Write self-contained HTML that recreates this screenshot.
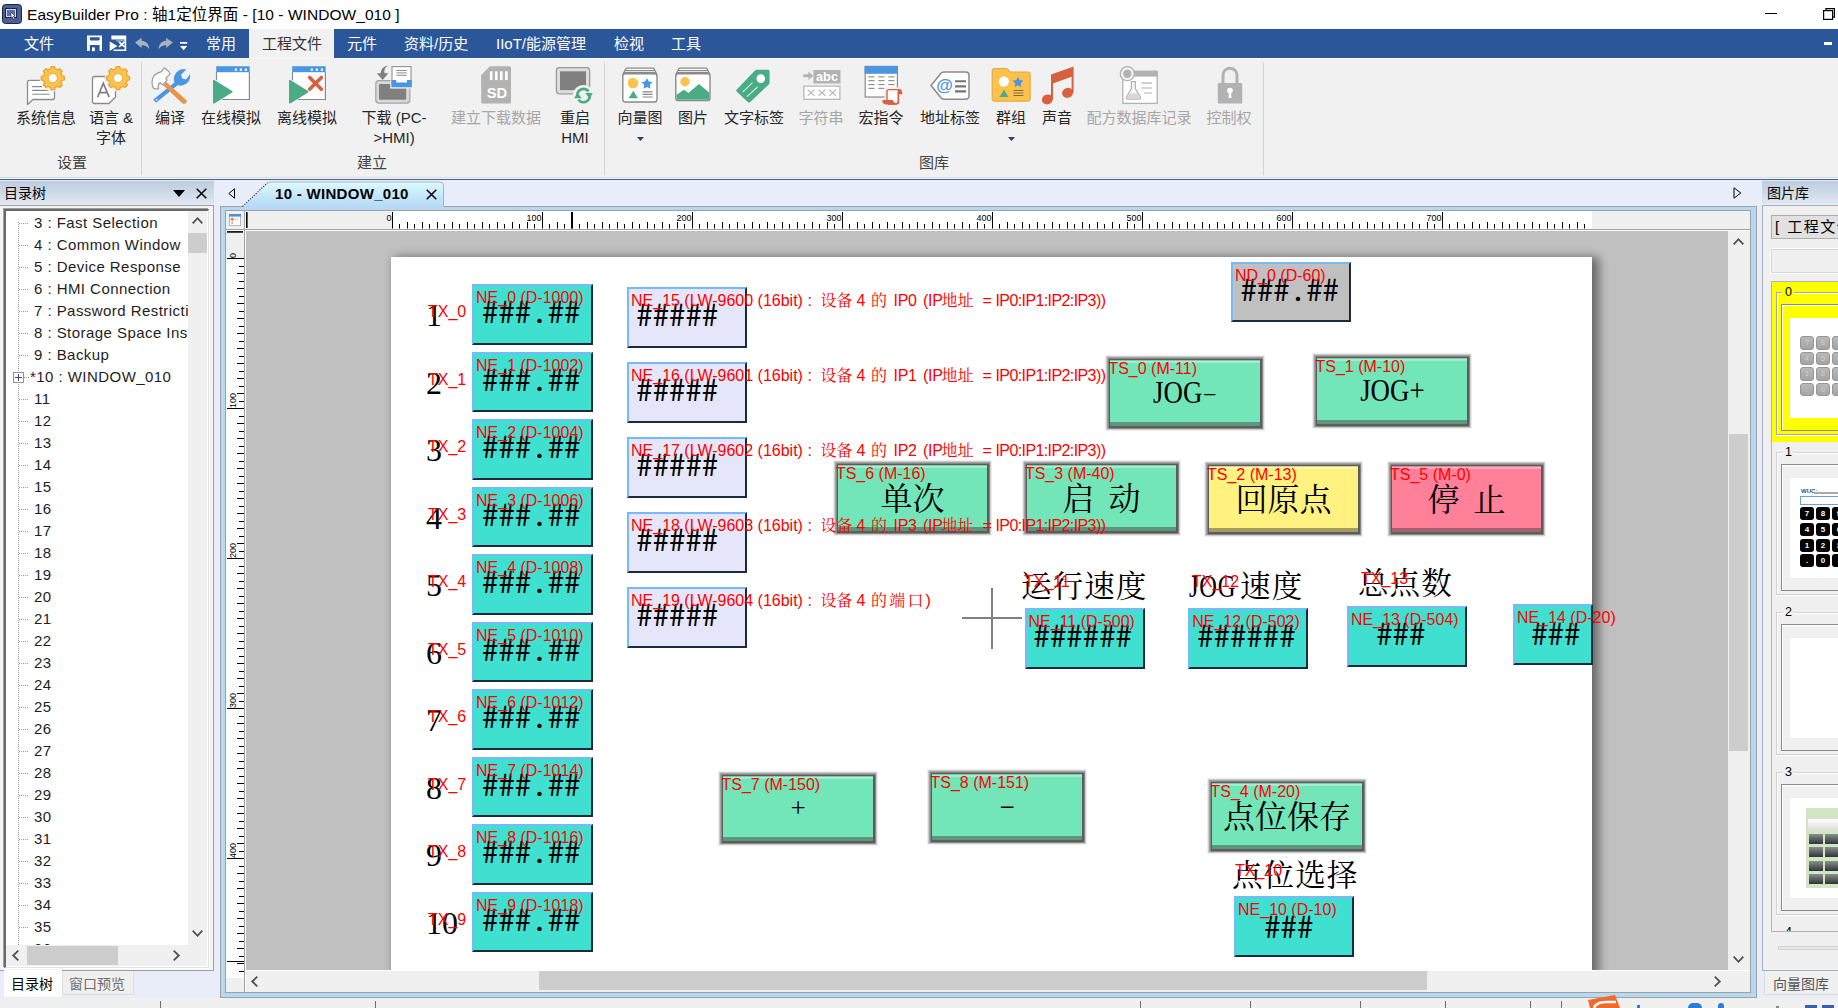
<!DOCTYPE html>
<html lang="zh-CN"><head><meta charset="utf-8"><title>EasyBuilder Pro</title>
<style>
*{box-sizing:border-box;margin:0;padding:0}
html,body{width:1838px;height:1008px;overflow:hidden;background:#f0f0f0}
body{position:relative;font-family:"Liberation Sans","Noto Sans CJK SC",sans-serif;font-size:15px;color:#1e1e1e}
.a{position:absolute}
.t{position:absolute;white-space:nowrap;line-height:1}
#title{left:0;top:0;width:1838px;height:29px;background:#fff}
#menubar{left:0;top:29px;width:1838px;height:29px;background:#2b579a}
#menubar .t{color:#fff;font-size:15px;top:7px}
#ribbon{left:0;top:58px;width:1838px;height:119px;background:#f1f1f1}
.rl{position:absolute;white-space:nowrap;font-size:15px;line-height:20px;text-align:center;color:#262626;transform:translateX(-50%)}
.rl.d{color:#a6a6a6}
.gl{position:absolute;white-space:nowrap;font-size:15px;line-height:1;color:#444;top:97px;transform:translateX(-50%)}
.sep{position:absolute;top:4px;width:1px;height:113px;background:#d4d4d4}
.ic{position:absolute;overflow:visible}
.red{position:absolute;white-space:nowrap;color:#f00;font-size:16px;line-height:1;font-family:"Liberation Sans","Noto Serif CJK SC",sans-serif}
.ne{position:absolute;background:#40e0d0;border-style:solid;border-width:2px;border-color:#78b9fc #1a2b40 #1a2b40 #78b9fc}
.hash{position:absolute;white-space:nowrap;font-family:"Noto Sans Mono CJK SC","IPAGothic","Liberation Mono",monospace;font-size:32px;line-height:1;color:#000;letter-spacing:.4px;transform:scaleY(.95)}
.lat{display:inline-block;transform-origin:0 50%;font-family:"Liberation Serif",serif}
.sim{position:absolute;white-space:nowrap;font-family:"Liberation Serif","Noto Serif CJK SC",serif;font-size:32px;line-height:1;color:#000}
.ts{position:absolute;box-shadow:.5px .5px 0 1.9px #5c5c5c,0 0 0 3.1px #a2a2a2,0 0 0 4.4px #d2d2d2}
.ts i{position:absolute;left:0;top:0;right:0;bottom:0;box-shadow:inset 0 -4px 0 rgba(70,70,70,.5);background:linear-gradient(180deg,rgba(90,90,90,.35) 0,rgba(255,255,255,.38) 1.5px,rgba(255,255,255,.3) 2.5px,rgba(255,255,255,0) 3.5px)}
.tr{position:absolute;left:34px;white-space:nowrap;font-size:15px;line-height:1;letter-spacing:.45px}
.dot{position:absolute;background-image:linear-gradient(90deg,#9a9a9a 50%,transparent 50%);background-size:2px 1px;height:1px}
.vdot{position:absolute;background-image:linear-gradient(180deg,#9a9a9a 50%,transparent 50%);background-size:1px 2px;width:1px}
</style></head><body>

<div id="title" class="a">
<svg class="ic" style="left:2px;top:4px" width="20" height="20" viewBox="0 0 20 20"><rect x="0.5" y="0.5" width="19" height="19" rx="3" fill="#4a5f96" stroke="#1c2440"/><rect x="3.5" y="4.5" width="11" height="9" fill="#cfd8ee" stroke="#1c2440"/><rect x="5" y="6" width="8" height="6" fill="#5a70ad"/><path d="M9 8 L13 12 L11.5 12.3 L13 15 L11.8 15.6 L10.4 12.9 L9 14 Z" fill="#fff" stroke="#1c2440" stroke-width=".6"/></svg>
<span class="t" id="ttl" style="left:27px;top:7px;font-size:15.5px;color:#000;letter-spacing:.05px">EasyBuilder Pro : 轴1定位界面 - [10 - WINDOW_010 ]</span>
<div class="a" style="left:1765px;top:13px;width:12px;height:1px;background:#000"></div>
<svg class="ic" style="left:1823px;top:8px" width="13" height="12" viewBox="0 0 13 12"><path d="M2.9 2.6 V0.6 H11.4 V9.1 H9.6" fill="none" stroke="#000" stroke-width="1.2"/><rect x="0.6" y="2.6" width="9" height="8.8" fill="none" stroke="#000" stroke-width="1.2"/></svg>
</div>
<div id="menubar" class="a">
<div class="a" style="left:249px;top:0;width:85px;height:29px;background:#f1f1f1"></div>
<span class="t" style="left:24px;color:#fff">文件</span>
<span class="t" style="left:206px;color:#fff">常用</span>
<span class="t" style="left:262px;color:#333">工程文件</span>
<span class="t" style="left:347px;color:#fff">元件</span>
<span class="t" style="left:404px;color:#fff">资料/历史</span>
<span class="t" style="left:496px;color:#fff">IIoT/能源管理</span>
<span class="t" style="left:614px;color:#fff">检视</span>
<span class="t" style="left:671px;color:#fff">工具</span>
<svg class="ic" style="left:87px;top:6px" width="15" height="16" viewBox="87 35 15 16"><rect x="87" y="35.5" width="15" height="15.5" fill="#fff"/><path d="M89.8 37.2 H99.6 V39.2 Q99.6 40.6 98.2 40.6 H91.2 Q89.8 40.6 89.8 39.2Z" fill="#2b579a"/><rect x="89.8" y="45" width="9.8" height="6.2" fill="#2b579a"/><rect x="92" y="47.4" width="2.8" height="3.8" fill="#fff"/></svg>
<svg class="ic" style="left:109px;top:6px" width="18" height="16" viewBox="109 35 18 16"><rect x="111.4" y="35.5" width="14.8" height="4" fill="#fff"/><path d="M125.4 39 V50.2 H113.6" fill="none" stroke="#fff" stroke-width="1.6"/><path d="M109.7 41.4 L117.4 46 L109.7 51 Z" fill="#fff"/><path d="M119 41.8 L124.6 47 M124.6 41.8 L119 47" stroke="#fff" stroke-width="1.7"/><rect x="116" y="40.2" width="9" height="1.2" fill="#fff" opacity=".55"/></svg>
<svg class="ic" style="left:134px;top:8px" width="16" height="13" viewBox="134 37 16 13"><path d="M135 42.6 L141.6 37.8 V40.8 C146.4 41 149 44.2 149.2 49.4 C147 46 144.8 45.2 141.6 45.2 V48 Z" fill="#aab0bc"/></svg>
<svg class="ic" style="left:158px;top:8px" width="16" height="13" viewBox="158 37 16 13"><path d="M172.8 42.6 L166.2 37.8 V40.8 C161.4 41 158.8 44.2 158.6 49.4 C160.8 46 163 45.2 166.2 45.2 V48 Z" fill="#aab0bc"/></svg>
<svg class="ic" style="left:180px;top:12px" width="8" height="10" viewBox="180 41 8 10"><rect x="180" y="42" width="7.2" height="1.7" fill="#fff"/><path d="M180 46 H187.2 L183.6 50.2 Z" fill="#fff"/></svg>
<div class="a" style="left:1824px;top:13px;width:8px;height:3px;background:#fff"></div>
</div>
<div id="ribbon" class="a">
<div class="a" style="left:0;top:0;width:1838px;height:1px;background:#f6f6f6"></div>
<div class="a" style="left:27px;top:8px;width:38px;height:40px"><svg style="position:absolute;left:0;top:0;overflow:visible" width="38" height="40" viewBox="27 66 38 40"><path d="M29.5 80.3 H52.5 Q54.5 80.3 54.5 82.3 V97.5 Q54.5 99.5 52.5 99.5 H33 L27.5 104.6 V82.3 Q27.5 80.3 29.5 80.3Z" fill="#fff" stroke="#8a8a8a" stroke-width="1.3" stroke-linejoin="round"/><path d="M32.2 86.6H42 M32.2 90.4H49.5 M32.2 94.3H49.5" stroke="#8a8a8a" stroke-width="1.1"/><circle cx="52.8" cy="78.1" r="13.3" fill="#f1f1f1"/><path d="M62.13 75.86 L64.36 76.27 L64.36 79.93 L62.13 80.34 L60.99 83.12 L62.27 84.98 L59.68 87.57 L57.82 86.29 L55.04 87.43 L54.63 89.66 L50.97 89.66 L50.56 87.43 L47.78 86.29 L45.92 87.57 L43.33 84.98 L44.61 83.12 L43.47 80.34 L41.24 79.93 L41.24 76.27 L43.47 75.86 L44.61 73.08 L43.33 71.22 L45.92 68.63 L47.78 69.91 L50.56 68.77 L50.97 66.54 L54.63 66.54 L55.04 68.77 L57.82 69.91 L59.68 68.63 L62.27 71.22 L60.99 73.08Z" fill="#fcc24c" stroke="#e6a73a" stroke-width="1.3" stroke-linejoin="round"/><circle cx="52.8" cy="78.1" r="4.6" fill="#fff" stroke="#e6a73a" stroke-width="0.9"/></svg></div>
<div class="rl" style="left:46px;top:50px">系统信息</div>
<div class="a" style="left:90px;top:8px;width:38px;height:40px"><svg style="position:absolute;left:0;top:0;overflow:visible" width="38" height="40" viewBox="90 66 38 40"><path d="M94.5 76.5 H113.5 Q115.5 76.5 115.5 78.5 V97 L109 103.5 H94.5 Q92.5 103.5 92.5 101.5 V78.5 Q92.5 76.5 94.5 76.5Z" fill="#fff" stroke="#8a8a8a" stroke-width="1.3" stroke-linejoin="round"/><path d="M97.6 97.2 L103.3 83.2 L109.2 97.2 M99.6 92.6 H107.2" fill="none" stroke="#7f7f7f" stroke-width="1.7"/><circle cx="118.0" cy="78.1" r="13.3" fill="#f1f1f1"/><path d="M127.33 75.86 L129.56 76.27 L129.56 79.93 L127.33 80.34 L126.19 83.12 L127.47 84.98 L124.88 87.57 L123.02 86.29 L120.24 87.43 L119.83 89.66 L116.17 89.66 L115.76 87.43 L112.98 86.29 L111.12 87.57 L108.53 84.98 L109.81 83.12 L108.67 80.34 L106.44 79.93 L106.44 76.27 L108.67 75.86 L109.81 73.08 L108.53 71.22 L111.12 68.63 L112.98 69.91 L115.76 68.77 L116.17 66.54 L119.83 66.54 L120.24 68.77 L123.02 69.91 L124.88 68.63 L127.47 71.22 L126.19 73.08Z" fill="#fcc24c" stroke="#e6a73a" stroke-width="1.3" stroke-linejoin="round"/><circle cx="118.0" cy="78.1" r="4.6" fill="#fff" stroke="#e6a73a" stroke-width="0.9"/></svg></div>
<div class="rl" style="left:111px;top:50px">语言 &amp;<br>字体</div>
<div class="a" style="left:151px;top:8px;width:38px;height:40px"><svg style="position:absolute;left:0;top:0;overflow:visible" width="38" height="40" viewBox="151 66 38 40"><path d="M156 102.8 L153.3 99.6 L174.5 82.5 Q172.5 77 176.5 72.2 Q180.5 68 186.2 69.4 L181 74.8 L182.2 78.6 L186 79.6 L190 74.2 Q190.8 80 186.5 83.6 Q182.5 86.6 177.6 85.2 Z" fill="#4a96e2"/><circle cx="156.6" cy="99.6" r="0.9" fill="#fff"/><path d="M163.2 85.2 L166.2 82 L186.5 100.2 Q187.3 102.2 185.8 103.2 Q184.4 104.4 182.6 103.4 Z" fill="#e8924a"/><path d="M158.6 88.6 Q154.5 89.5 153 87.6 Q150.5 81 154.2 75.6 Q157 72.6 161.5 71.6 L163.2 69 Q164 67.6 165.4 68.5 L169.6 72.4 Q170.4 73.4 169.6 74.4 L165.8 78.4 L167.2 80.2 L162.6 84.8 L160.2 82.6 Q157.5 84.2 158.6 88.6 Z" fill="#fff" stroke="#9a9a9a" stroke-width="1.2" stroke-linejoin="round"/></svg></div>
<div class="rl" style="left:170px;top:50px">编译</div>
<div class="a" style="left:213px;top:8px;width:38px;height:40px"><svg style="position:absolute;left:0;top:0;overflow:visible" width="38" height="40" viewBox="213 66 38 40"><rect x="216.2" y="66.2" width="33.5" height="33.3" fill="#fff"/><path d="M216.5 72 V99.5 H249.4 V72" fill="none" stroke="#8a8a8a" stroke-width="1.2"/><rect x="216.2" y="66.2" width="33.5" height="6" fill="#4a96e2"/><rect x="234.8" y="68.6" width="2.2" height="2.2" fill="#fff"/><rect x="239.8" y="68.6" width="2.2" height="2.2" fill="#fff"/><rect x="244.8" y="68.6" width="2.2" height="2.2" fill="#fff"/><path d="M213.8 80.2 V103.2 L232.0 91.7Z" fill="#f1f1f1" stroke="#f1f1f1" stroke-width="2.6" stroke-linejoin="round"/><path d="M213.8 80.6 V102.8 L231.6 91.7Z" fill="#4aab87" stroke="#4aab87" stroke-width="1.6" stroke-linejoin="round"/></svg></div>
<div class="rl" style="left:231px;top:50px">在线模拟</div>
<div class="a" style="left:289px;top:8px;width:38px;height:40px"><svg style="position:absolute;left:0;top:0;overflow:visible" width="38" height="40" viewBox="289 66 38 40"><rect x="292.2" y="66.2" width="33.5" height="33.3" fill="#fff"/><path d="M292.5 72 V99.5 H325.4 V72" fill="none" stroke="#8a8a8a" stroke-width="1.2"/><rect x="292.2" y="66.2" width="33.5" height="6" fill="#4a96e2"/><rect x="310.8" y="68.6" width="2.2" height="2.2" fill="#fff"/><rect x="315.8" y="68.6" width="2.2" height="2.2" fill="#fff"/><rect x="320.8" y="68.6" width="2.2" height="2.2" fill="#fff"/><path d="M309.6 77.4 L321.4 89.2 M321.4 77.4 L309.6 89.2" stroke="#d9603f" stroke-width="3.6" stroke-linecap="round"/><path d="M289.8 80.2 V103.2 L308.0 91.7Z" fill="#f1f1f1" stroke="#f1f1f1" stroke-width="2.6" stroke-linejoin="round"/><path d="M289.8 80.6 V102.8 L307.6 91.7Z" fill="#4aab87" stroke="#4aab87" stroke-width="1.6" stroke-linejoin="round"/></svg></div>
<div class="rl" style="left:307px;top:50px">离线模拟</div>
<div class="a" style="left:375px;top:8px;width:38px;height:40px"><svg style="position:absolute;left:0;top:0;overflow:visible" width="38" height="40" viewBox="375 66 38 40"><rect x="375.8" y="80.6" width="34" height="22.5" rx="3" fill="#d9d9d9" stroke="#a3a3a3" stroke-width="1.2"/><rect x="379" y="84" width="27.2" height="15.8" rx="1" fill="#808080"/><rect x="390.2" y="65.2" width="22.2" height="23.4" fill="#f1f1f1"/><rect x="392" y="66.6" width="19" height="17" fill="#fff" stroke="#9a9a9a" stroke-width="1.2"/><path d="M396.4 70.5H406.8 M396.4 72.9H406.8 M396.4 75.3H406.8" stroke="#8a8a8a" stroke-width="1"/><path d="M391.4 80 H396.3 V82.6 H406.9 V80 H411.8 V87.3 H391.4Z" fill="#4a96e2"/><path d="M388.4 65.4 Q383.2 68.2 384.6 73.2 H388.4 L382.6 80 L376.8 73.2 H380.6 Q380.4 67 388.4 65.4Z" fill="#808080"/></svg></div>
<div class="rl" style="left:394px;top:50px">下载 (PC-<br>&gt;HMI)</div>
<div class="a" style="left:480px;top:8px;width:32px;height:40px"><svg style="position:absolute;left:0;top:0;overflow:visible" width="32" height="40" viewBox="480 66 32 40"><path d="M489.8 66.2 H509.4 Q511 66.2 511 67.8 V102 Q511 103.6 509.4 103.6 H482.8 Q481.2 103.6 481.2 102 V75.2 Z" fill="#b2b2b2"/><rect x="489.9" y="71.3" width="2.6" height="8.8" fill="#fff"/><rect x="495.0" y="71.3" width="2.6" height="8.8" fill="#fff"/><rect x="500.0" y="71.3" width="2.6" height="8.8" fill="#fff"/><rect x="505.1" y="71.3" width="2.6" height="8.8" fill="#fff"/><text x="497" y="97.6" font-family="Liberation Sans,sans-serif" font-weight="bold" font-size="15.4" text-anchor="middle" fill="#fff" textLength="20.4" lengthAdjust="spacingAndGlyphs">SD</text></svg></div>
<div class="rl d" style="left:496px;top:50px">建立下载数据</div>
<div class="a" style="left:556px;top:8px;width:38px;height:40px"><svg style="position:absolute;left:0;top:0;overflow:visible" width="38" height="40" viewBox="556 66 38 40"><rect x="556.4" y="67.6" width="33.2" height="26.2" rx="3" fill="#dedede" stroke="#9b9b9b" stroke-width="1.3"/><rect x="560" y="71.3" width="26" height="18.8" fill="#808080"/><circle cx="583.5" cy="95.6" r="10.6" fill="#f1f1f1"/><path d="M577.2 95 A6.4 6.4 0 0 1 588.6 91.4" fill="none" stroke="#4aab87" stroke-width="2.6"/><path d="M585.2 93 H592.8 L589.6 98.4Z" fill="#4aab87"/><path d="M589.8 96.2 A6.4 6.4 0 0 1 578.4 99.8" fill="none" stroke="#4aab87" stroke-width="2.6"/><path d="M581.8 98.2 H574.2 L577.4 92.8Z" fill="#4aab87"/></svg></div>
<div class="rl" style="left:575px;top:50px">重启<br>HMI</div>
<div class="a" style="left:621px;top:8px;width:38px;height:40px"><svg style="position:absolute;left:0;top:0;overflow:visible" width="38" height="40" viewBox="621 66 38 40"><path d="M622.8 74.6 L625.6 69 Q626.0 68.2 627.2 68.2 H652.6 Q653.8 68.2 654.2 69 L657.0 74.6" fill="#fff" stroke="#8a8a8a" stroke-width="1.2"/><path d="M625.0 70.6H654.8 M624.0 72.6H655.8" stroke="#8a8a8a" stroke-width="1.1"/><rect x="622.8" y="73.8" width="34.2" height="28.2" rx="2.4" fill="#fff" stroke="#8a8a8a" stroke-width="1.4"/><circle cx="633" cy="83" r="5.3" fill="#fcc24c"/><path d="M647.00 78.00 L648.76 81.47 L652.61 82.08 L649.85 84.83 L650.47 88.67 L647.00 86.90 L643.53 88.67 L644.15 84.83 L641.39 82.08 L645.24 81.47Z" fill="#4a96e2"/><path d="M628.6 98.2 H638 L633.3 90.8Z" fill="#4aab87"/><path d="M642.5 91.8H652.6 M642.5 94.4H652.6 M642.5 97H652.6" stroke="#8a8a8a" stroke-width="1.2"/></svg></div>
<div class="rl" style="left:640px;top:50px">向量图</div>
<div class="a" style="left:674px;top:8px;width:38px;height:40px"><svg style="position:absolute;left:0;top:0;overflow:visible" width="38" height="40" viewBox="674 66 38 40"><path d="M675.8 74.6 L678.6 69 Q679.0 68.2 680.2 68.2 H705.6 Q706.8 68.2 707.2 69 L710.0 74.6" fill="#fff" stroke="#8a8a8a" stroke-width="1.2"/><path d="M678.0 70.6H707.8 M677.0 72.6H708.8" stroke="#8a8a8a" stroke-width="1.1"/><rect x="675.8" y="73.8" width="34.2" height="26.8" rx="2.4" fill="#fff" stroke="#8a8a8a" stroke-width="1.4"/><circle cx="685" cy="81.7" r="4.7" fill="#fcc24c"/><path d="M676.6 94.8 L684 89.8 L688.4 92.9 L699 84 L709.2 92.4 V99.8 H676.6Z" fill="#4aab87"/></svg></div>
<div class="rl" style="left:693px;top:50px">图片</div>
<div class="a" style="left:735px;top:8px;width:36px;height:40px"><svg style="position:absolute;left:0;top:0;overflow:visible" width="36" height="40" viewBox="735 66 36 40"><path d="M757 69.8 H768 Q769.6 69.8 769.6 71.4 V82.6 Q769.6 83.6 768.8 84.4 L750.2 102 Q749 103.2 747.8 102 L736.8 91.8 Q735.6 90.6 736.8 89.4 L755 70.6 Q755.8 69.8 757 69.8Z" fill="#4aab87"/><circle cx="760.8" cy="78.6" r="4.3" fill="#fff"/><path d="M742.7 92.1 L752.5 82.7 M747 96.7 L757.6 87" stroke="#d5ece2" stroke-width="1.1"/></svg></div>
<div class="rl" style="left:754px;top:50px">文字标签</div>
<div class="a" style="left:802px;top:8px;width:40px;height:40px"><svg style="position:absolute;left:0;top:0;overflow:visible" width="40" height="40" viewBox="802 66 40 40"><path d="M803.3 74.2 H808.4 V71.4 L813.2 75.7 L808.4 80 V77.2 H803.3Z" fill="#b2b2b2"/><rect x="813.4" y="70" width="27.1" height="13.5" fill="#b2b2b2"/><text x="827" y="81" font-family="Liberation Sans,sans-serif" font-weight="bold" font-size="12.5" text-anchor="middle" fill="#fff" textLength="22" lengthAdjust="spacingAndGlyphs">abc</text><rect x="803.9" y="86.1" width="36" height="13.2" fill="#fff" stroke="#b2b2b2" stroke-width="1.2"/><path d="M807.6 89.6 L814.4 95.8 M814.4 89.6 L807.6 95.8" stroke="#b2b2b2" stroke-width="1.1"/><path d="M818.6 89.6 L825.4 95.8 M825.4 89.6 L818.6 95.8" stroke="#b2b2b2" stroke-width="1.1"/><path d="M829.3 89.6 L836.1 95.8 M836.1 89.6 L829.3 95.8" stroke="#b2b2b2" stroke-width="1.1"/></svg></div>
<div class="rl d" style="left:821px;top:50px">字符串</div>
<div class="a" style="left:864px;top:8px;width:39px;height:40px"><svg style="position:absolute;left:0;top:0;overflow:visible" width="39" height="40" viewBox="864 66 39 40"><rect x="865.2" y="66.4" width="32.2" height="30.6" fill="#fff" stroke="#8a8a8a" stroke-width="1.2"/><rect x="864.6" y="66.2" width="33.4" height="7.6" fill="#4a96e2"/><rect x="868.3" y="76.3" width="6.2" height="1.1" fill="#8a8a8a"/><rect x="878.3" y="76.3" width="6.2" height="1.1" fill="#8a8a8a"/><rect x="888.3" y="76.3" width="6.2" height="1.1" fill="#8a8a8a"/><rect x="868.3" y="80.1" width="6.2" height="1.1" fill="#8a8a8a"/><rect x="878.3" y="80.1" width="6.2" height="1.1" fill="#8a8a8a"/><rect x="888.3" y="80.1" width="6.2" height="1.1" fill="#8a8a8a"/><rect x="868.3" y="84.0" width="6.2" height="1.1" fill="#8a8a8a"/><rect x="878.3" y="84.0" width="6.2" height="1.1" fill="#8a8a8a"/><rect x="888.3" y="84.0" width="6.2" height="1.1" fill="#8a8a8a"/><rect x="868.3" y="87.8" width="6.2" height="1.1" fill="#8a8a8a"/><rect x="878.3" y="87.8" width="6.2" height="1.1" fill="#8a8a8a"/><rect x="884.6" y="87.4" width="15" height="12" fill="#f1f1f1"/><path d="M888 104 H896.4 Q898.6 104 898.6 101.6 V92.6 Q898.6 90.6 900.2 90.6 Q901.6 90.6 901.6 92.4 V93.6 H898.6" fill="none" stroke="#d9603f" stroke-width="1.3"/><path d="M887 100.6 V91.6 Q887 89.6 889.2 89.6 H900.2 Q898.2 89.8 898.2 92 V101.2 Q898.2 103.8 895.8 103.8 H885.8 Q883.2 103.6 883 100.8 H892.6 Q892.8 103.6 895.6 103.6" fill="#fff" stroke="#d9603f" stroke-width="1.4" stroke-linejoin="round"/><path d="M883 100.8 H892.6 Q892.8 103.6 895 103.8 H885.8 Q883.2 103.6 883 100.8Z" fill="#d9603f"/><path d="M898.4 93.6 H901.6 V92.4 Q901.6 90.6 900.2 90.4 Q898.4 90.6 898.4 92.6Z" fill="#d9603f"/></svg></div>
<div class="rl" style="left:881px;top:50px">宏指令</div>
<div class="a" style="left:930px;top:8px;width:40px;height:40px"><svg style="position:absolute;left:0;top:0;overflow:visible" width="40" height="40" viewBox="930 66 40 40"><path d="M931 85.5 L941 73.2 Q942.2 71.9 943.8 71.9 H965.6 Q969 71.9 969 75.3 V95.8 Q969 99.2 965.6 99.2 H943.8 Q942.2 99.2 941 97.8 Z" fill="#fff" stroke="#8a8a8a" stroke-width="1.5" stroke-linejoin="round"/><text x="944.6" y="91" font-family="Liberation Sans,sans-serif" font-weight="bold" font-size="17" text-anchor="middle" fill="#4a96e2">@</text><path d="M955 81.3H966 M955 86.4H966 M955 91.4H966" stroke="#757575" stroke-width="2.1"/></svg></div>
<div class="rl" style="left:950px;top:50px">地址标签</div>
<div class="a" style="left:991px;top:8px;width:40px;height:40px"><svg style="position:absolute;left:0;top:0;overflow:visible" width="40" height="40" viewBox="991 66 40 40"><path d="M994 68.6 H1006.6 Q1008 68.6 1008.6 69.8 L1009.6 72 H1028.4 Q1030.2 72 1030.2 73.8 V99.4 Q1030.2 101.2 1028.4 101.2 H994 Q992.2 101.2 992.2 99.4 V70.4 Q992.2 68.6 994 68.6Z" fill="#fcc24c" stroke="#e0a63c" stroke-width="1"/><circle cx="1003.9" cy="81.6" r="5" fill="#fff"/><path d="M1018.00 76.70 L1019.70 80.05 L1023.42 80.64 L1020.76 83.30 L1021.35 87.01 L1018.00 85.30 L1014.65 87.01 L1015.24 83.30 L1012.58 80.64 L1016.30 80.05Z" fill="#4a96e2"/><path d="M999.5 96.9 H1008.5 L1004 89.8Z" fill="#4aab87"/><path d="M1013.5 90.5H1023.4 M1013.5 93H1023.4 M1013.5 95.5H1023.4" stroke="#7d6a3a" stroke-width="1.1"/></svg></div>
<div class="rl" style="left:1011px;top:50px">群组</div>
<div class="a" style="left:1041px;top:8px;width:34px;height:40px"><svg style="position:absolute;left:0;top:0;overflow:visible" width="34" height="40" viewBox="1041 66 34 40"><ellipse cx="1047.4" cy="99.4" rx="5.6" ry="4.9" fill="#d9603f" transform="rotate(-20 1047.4 99.4)"/><ellipse cx="1067.6" cy="92.8" rx="5.6" ry="4.9" fill="#d9603f" transform="rotate(-20 1067.6 92.8)"/><path d="M1051 74.4 L1073.6 66.4 V92.4 H1071.6 V76.8 L1053 83.4 V99 H1051Z" fill="#d9603f"/></svg></div>
<div class="rl" style="left:1057px;top:50px">声音</div>
<div class="a" style="left:1119px;top:8px;width:38px;height:40px"><svg style="position:absolute;left:0;top:0;overflow:visible" width="38" height="40" viewBox="1119 66 38 40"><rect x="1122.8" y="71.4" width="34.4" height="32" fill="#fff" stroke="#b2b2b2" stroke-width="1.3"/><rect x="1122.2" y="70.8" width="35.6" height="5.8" fill="#b2b2b2"/><circle cx="1127.3" cy="73.7" r="7" fill="#f4f4f4" stroke="#b2b2b2" stroke-width="1.3"/><circle cx="1127.3" cy="73.7" r="4.2" fill="#b2b2b2"/><path d="M1131.4 81.6 H1135.4 V88.6 L1140.4 97 Q1141 99.2 1138.8 99.2 H1128 Q1125.8 99.2 1126.4 97 L1131.4 88.6Z" fill="#f6f6f6" stroke="#b2b2b2" stroke-width="1.2" stroke-linejoin="round"/><path d="M1128.8 93.6 H1138 L1140 97 Q1140.4 98.6 1138.8 98.6 H1128 Q1126.4 98.6 1126.8 97Z" fill="#d8d8d8"/><path d="M1141.5 83.2H1152 M1141.5 88H1152 M1144 93H1152" stroke="#b2b2b2" stroke-width="1.2"/></svg></div>
<div class="rl d" style="left:1139px;top:50px">配方数据库记录</div>
<div class="a" style="left:1217px;top:8px;width:26px;height:40px"><svg style="position:absolute;left:0;top:0;overflow:visible" width="26" height="40" viewBox="1217 66 26 40"><path d="M1223 83.4 V75.2 A7 7 0 0 1 1237 75.2 V83.4" fill="none" stroke="#b2b2b2" stroke-width="3"/><rect x="1217.8" y="82.9" width="24.4" height="20.6" rx="1.2" fill="#b2b2b2"/><circle cx="1230" cy="90.6" r="2.8" fill="#fff"/><path d="M1228.9 92 H1231.1 L1231.4 98 H1228.6Z" fill="#fff"/></svg></div>
<div class="rl d" style="left:1229px;top:50px">控制权</div>
<svg class="ic" style="left:637px;top:79px" width="7" height="4" viewBox="0 0 7 4"><path d="M0 0 H7 L3.5 4 Z" fill="#2b3f6b"/></svg>
<svg class="ic" style="left:1008px;top:79px" width="7" height="4" viewBox="0 0 7 4"><path d="M0 0 H7 L3.5 4 Z" fill="#2b3f6b"/></svg>
<div class="gl" style="left:72px">设置</div>
<div class="gl" style="left:372px">建立</div>
<div class="gl" style="left:934px">图库</div>
<div class="sep" style="left:141px"></div>
<div class="sep" style="left:604px"></div>
<div class="sep" style="left:1263px"></div>
<div class="a" style="left:0;top:118px;width:1838px;height:1px;background:#f1f1f1"></div>
</div>
<div class="a" style="left:0;top:177px;width:1838px;height:1px;background:#dcdcdc"></div>
<div class="a" style="left:0;top:178px;width:1838px;height:1px;background:#f8f8f8"></div>
<div class="a" style="left:0;top:179px;width:1838px;height:1px;background:#3c62a6"></div>
<div class="a" style="left:0;top:180px;width:1838px;height:818px;background:#e9ecf9"></div>
<div class="a" style="left:0;top:180px;width:214px;height:24px;background:linear-gradient(180deg,#f4f6fb 0,#bfcde0 1.5px,#c6d3e3 30%,#d5dfec 70%,#e0e8f2 100%)"></div>
<span class="t" style="left:4px;top:186px;font-size:14px;color:#000">目录树</span>
<svg class="ic" style="left:173px;top:190px" width="12" height="7" viewBox="0 0 12 7"><path d="M0 0 H12 L6 7 Z" fill="#000"/></svg>
<svg class="ic" style="left:196px;top:188px" width="11" height="11" viewBox="0 0 11 11"><path d="M0.7 0.7 L10.3 10.3 M10.3 0.7 L0.7 10.3" stroke="#000" stroke-width="1.5"/></svg>
<div class="a" style="left:0;top:205px;width:214px;height:766px;background:#f4f4f4;border:1px solid #a0a0a0;border-left:0"></div>
<div class="a" style="left:4px;top:209px;width:205px;height:759px;background:#fff;border:1px solid #e3e3e3;border-top:2px solid #696969;border-left:2px solid #696969;box-shadow:-1px -1px 0 #a0a0a0,1px 1px 0 #fff"></div>
<div class="a" id="tree" style="left:6px;top:211px;width:182px;height:734px;overflow:hidden;background:#fff">
<span class="tr" style="left:28px;top:3.6px">3 : Fast Selection</span>
<div class="dot" style="left:13px;top:11.6px;width:9px"></div>
<span class="tr" style="left:28px;top:25.6px">4 : Common Window</span>
<div class="dot" style="left:13px;top:33.6px;width:9px"></div>
<span class="tr" style="left:28px;top:47.6px">5 : Device Response</span>
<div class="dot" style="left:13px;top:55.6px;width:9px"></div>
<span class="tr" style="left:28px;top:69.6px">6 : HMI Connection</span>
<div class="dot" style="left:13px;top:77.6px;width:9px"></div>
<span class="tr" style="left:28px;top:91.6px">7 : Password Restriction</span>
<div class="dot" style="left:13px;top:99.6px;width:9px"></div>
<span class="tr" style="left:28px;top:113.6px">8 : Storage Space Insufficient</span>
<div class="dot" style="left:13px;top:121.6px;width:9px"></div>
<span class="tr" style="left:28px;top:135.6px">9 : Backup</span>
<div class="dot" style="left:13px;top:143.6px;width:9px"></div>
<span class="tr" style="left:24px;top:157.6px">*10 : WINDOW_010</span>
<span class="tr" style="left:28px;top:179.6px">11</span>
<div class="dot" style="left:13px;top:187.6px;width:9px"></div>
<span class="tr" style="left:28px;top:201.6px">12</span>
<div class="dot" style="left:13px;top:209.6px;width:9px"></div>
<span class="tr" style="left:28px;top:223.6px">13</span>
<div class="dot" style="left:13px;top:231.6px;width:9px"></div>
<span class="tr" style="left:28px;top:245.6px">14</span>
<div class="dot" style="left:13px;top:253.6px;width:9px"></div>
<span class="tr" style="left:28px;top:267.6px">15</span>
<div class="dot" style="left:13px;top:275.6px;width:9px"></div>
<span class="tr" style="left:28px;top:289.6px">16</span>
<div class="dot" style="left:13px;top:297.6px;width:9px"></div>
<span class="tr" style="left:28px;top:311.6px">17</span>
<div class="dot" style="left:13px;top:319.6px;width:9px"></div>
<span class="tr" style="left:28px;top:333.6px">18</span>
<div class="dot" style="left:13px;top:341.6px;width:9px"></div>
<span class="tr" style="left:28px;top:355.6px">19</span>
<div class="dot" style="left:13px;top:363.6px;width:9px"></div>
<span class="tr" style="left:28px;top:377.6px">20</span>
<div class="dot" style="left:13px;top:385.6px;width:9px"></div>
<span class="tr" style="left:28px;top:399.6px">21</span>
<div class="dot" style="left:13px;top:407.6px;width:9px"></div>
<span class="tr" style="left:28px;top:421.6px">22</span>
<div class="dot" style="left:13px;top:429.6px;width:9px"></div>
<span class="tr" style="left:28px;top:443.6px">23</span>
<div class="dot" style="left:13px;top:451.6px;width:9px"></div>
<span class="tr" style="left:28px;top:465.6px">24</span>
<div class="dot" style="left:13px;top:473.6px;width:9px"></div>
<span class="tr" style="left:28px;top:487.6px">25</span>
<div class="dot" style="left:13px;top:495.6px;width:9px"></div>
<span class="tr" style="left:28px;top:509.6px">26</span>
<div class="dot" style="left:13px;top:517.6px;width:9px"></div>
<span class="tr" style="left:28px;top:531.6px">27</span>
<div class="dot" style="left:13px;top:539.6px;width:9px"></div>
<span class="tr" style="left:28px;top:553.6px">28</span>
<div class="dot" style="left:13px;top:561.6px;width:9px"></div>
<span class="tr" style="left:28px;top:575.6px">29</span>
<div class="dot" style="left:13px;top:583.6px;width:9px"></div>
<span class="tr" style="left:28px;top:597.6px">30</span>
<div class="dot" style="left:13px;top:605.6px;width:9px"></div>
<span class="tr" style="left:28px;top:619.6px">31</span>
<div class="dot" style="left:13px;top:627.6px;width:9px"></div>
<span class="tr" style="left:28px;top:641.6px">32</span>
<div class="dot" style="left:13px;top:649.6px;width:9px"></div>
<span class="tr" style="left:28px;top:663.6px">33</span>
<div class="dot" style="left:13px;top:671.6px;width:9px"></div>
<span class="tr" style="left:28px;top:685.6px">34</span>
<div class="dot" style="left:13px;top:693.6px;width:9px"></div>
<span class="tr" style="left:28px;top:707.6px">35</span>
<div class="dot" style="left:13px;top:715.6px;width:9px"></div>
<span class="tr" style="left:28px;top:729.6px">36</span>
<div class="dot" style="left:13px;top:737.6px;width:9px"></div>
<div class="vdot" style="left:12px;top:11px;height:730px"></div>
<div class="a" style="left:7px;top:161px;width:11px;height:11px;background:#fff;border:1px solid #919191"></div><div class="a" style="left:9px;top:166px;width:7px;height:1px;background:#3a4a8a"></div><div class="a" style="left:12px;top:163px;width:1px;height:7px;background:#3a4a8a"></div>
<div class="dot" style="left:18px;top:166px;width:5px"></div>
</div>
<div class="a" style="left:188px;top:211px;width:19px;height:734px;background:#f0f0f0"></div>
<div class="a" style="left:188px;top:233px;width:19px;height:20px;background:#cdcdcd"></div>
<svg class="ic" style="left:192px;top:217px" width="11" height="7" viewBox="0 0 11 7"><path d="M0.7 6.3 L5.5 1.2 L10.3 6.3" fill="none" stroke="#505050" stroke-width="1.8"/></svg>
<svg class="ic" style="left:192px;top:930px" width="11" height="7" viewBox="0 0 11 7"><path d="M0.7 0.7 L5.5 5.8 L10.3 0.7" fill="none" stroke="#505050" stroke-width="1.8"/></svg>
<div class="a" style="left:6px;top:945px;width:201px;height:21px;background:#f0f0f0"></div>
<div class="a" style="left:27px;top:946px;width:91px;height:19px;background:#cdcdcd"></div>
<svg class="ic" style="left:12px;top:950px" width="7" height="11" viewBox="0 0 7 11"><path d="M6.3 0.7 L1.2 5.5 L6.3 10.3" fill="none" stroke="#505050" stroke-width="1.8"/></svg>
<svg class="ic" style="left:173px;top:950px" width="7" height="11" viewBox="0 0 7 11"><path d="M0.7 0.7 L5.8 5.5 L0.7 10.3" fill="none" stroke="#505050" stroke-width="1.8"/></svg>
<div class="a" style="left:4px;top:970px;width:58px;height:27px;background:#fff"></div>
<span class="t" style="left:11px;top:977px;font-size:14px;color:#000">目录树</span>
<div class="a" style="left:62px;top:971px;width:72px;height:24px;background:#f0f0f0;border:1px solid #dcdcdc;border-top:0"></div>
<span class="t" style="left:69px;top:977px;font-size:14px;color:#6d6d6d">窗口预览</span>
<svg class="ic" style="left:228px;top:188px" width="8" height="11" viewBox="0 0 8 11"><path d="M6.5 0.8 V10.2 L0.8 5.5 Z" fill="none" stroke="#000" stroke-width="1"/></svg>
<svg class="ic" style="left:1733px;top:187px" width="9" height="12" viewBox="0 0 9 12"><path d="M1 0.8 V11.2 L7.8 6 Z" fill="none" stroke="#000" stroke-width="1"/></svg>
<svg class="ic" style="left:240px;top:181px;z-index:2" width="206" height="27" viewBox="0 0 206 27"><defs><linearGradient id="tg" x1="0" y1="0" x2="0" y2="1"><stop offset="0" stop-color="#ddfaff"/><stop offset="0.55" stop-color="#c4e6fa"/><stop offset="1" stop-color="#b5d9f5"/></linearGradient></defs><path d="M2 27 L27 2.5 Q29 1 32 1 H200 Q203.5 1 203.5 4.5 V27 Z" fill="url(#tg)"/><path d="M27.5 2 Q29 1 32 1 H200 Q203.5 1 203.5 4.5 V26" fill="none" stroke="#9fb6cf" stroke-width="1"/><path d="M2.5 25.5 L27.5 1.8" fill="none" stroke="#3c3c3c" stroke-width="1.1" stroke-dasharray="1.3 1.3"/></svg>
<span class="t" id="tabt" style="z-index:3;left:275px;top:186px;font-size:15px;font-weight:bold;color:#000;letter-spacing:.3px">10 - WINDOW_010</span>
<svg class="ic" style="z-index:3;left:426px;top:189px" width="11" height="11" viewBox="0 0 11 11"><path d="M0.7 0.7 L10.3 10.3 M10.3 0.7 L0.7 10.3" stroke="#000" stroke-width="1.5"/></svg>
<div class="a" style="left:220px;top:206px;width:1537px;height:792px;background:#b5d9f5;border:1px solid #a0a0a0"></div>
<div class="a" style="left:225px;top:210px;width:1526px;height:783px;background:#f0f0f0;border:1px solid #a0a0a0"></div>
<div class="a" style="left:226px;top:211px;width:20px;height:20px;background:#f0f0f0;border-right:1px solid #fff;border-bottom:1px solid #fff"></div>
<div class="a" style="left:226px;top:229px;width:1524px;height:1px;background:#a0a0a0"></div>
<div class="a" style="left:244px;top:211px;width:1px;height:781px;background:#a0a0a0"></div>
<svg class="ic" style="left:229px;top:214px" width="12" height="12" viewBox="0 0 12 12"><rect x="0.5" y="0.5" width="11" height="11" fill="#fff" stroke="#b4b9c2"/><rect x="0" y="0" width="12" height="2.6" fill="#4a90e0"/><circle cx="3.3" cy="5.2" r="1.7" fill="#f08a3c"/><rect x="2.6" y="7.6" width="1" height="2.4" fill="#888"/><rect x="6" y="4.8" width="3" height="1" fill="#c4c4c4"/></svg>
<div class="a" style="left:246px;top:211px;width:1504px;height:18px;background:#f0f0f0"></div>
<div class="a" style="left:392px;top:211px;width:1200px;height:18px;background:#fff"></div>
<div class="a" style="left:245px;top:230px;width:1505px;height:1px;background:#fff"></div>
<svg class="ic" style="left:245px;top:210px" width="1504" height="19" viewBox="0 0 1504 19">
<path d="M147.5 2V18.5M154.5 14V18.5M162.5 12V18.5M169.5 14V18.5M177.5 12V18.5M184.5 14V18.5M192.5 12V18.5M199.5 14V18.5M207.5 12V18.5M214.5 14V18.5M222.5 12V18.5M229.5 14V18.5M237.5 12V18.5M244.5 14V18.5M252.5 12V18.5M259.5 14V18.5M267.5 12V18.5M274.5 14V18.5M282.5 12V18.5M289.5 14V18.5M297.5 2V18.5M304.5 14V18.5M312.5 12V18.5M319.5 14V18.5M327.5 12V18.5M334.5 14V18.5M342.5 12V18.5M349.5 14V18.5M357.5 12V18.5M364.5 14V18.5M372.5 12V18.5M379.5 14V18.5M387.5 12V18.5M394.5 14V18.5M402.5 12V18.5M409.5 14V18.5M417.5 12V18.5M424.5 14V18.5M432.5 12V18.5M439.5 14V18.5M447.5 2V18.5M454.5 14V18.5M462.5 12V18.5M469.5 14V18.5M477.5 12V18.5M484.5 14V18.5M492.5 12V18.5M499.5 14V18.5M507.5 12V18.5M514.5 14V18.5M522.5 12V18.5M529.5 14V18.5M537.5 12V18.5M544.5 14V18.5M552.5 12V18.5M559.5 14V18.5M567.5 12V18.5M574.5 14V18.5M582.5 12V18.5M589.5 14V18.5M597.5 2V18.5M604.5 14V18.5M612.5 12V18.5M619.5 14V18.5M627.5 12V18.5M634.5 14V18.5M642.5 12V18.5M649.5 14V18.5M657.5 12V18.5M664.5 14V18.5M672.5 12V18.5M679.5 14V18.5M687.5 12V18.5M694.5 14V18.5M702.5 12V18.5M709.5 14V18.5M717.5 12V18.5M724.5 14V18.5M732.5 12V18.5M739.5 14V18.5M747.5 2V18.5M754.5 14V18.5M762.5 12V18.5M769.5 14V18.5M777.5 12V18.5M784.5 14V18.5M792.5 12V18.5M799.5 14V18.5M807.5 12V18.5M814.5 14V18.5M822.5 12V18.5M829.5 14V18.5M837.5 12V18.5M844.5 14V18.5M852.5 12V18.5M859.5 14V18.5M867.5 12V18.5M874.5 14V18.5M882.5 12V18.5M889.5 14V18.5M897.5 2V18.5M904.5 14V18.5M912.5 12V18.5M919.5 14V18.5M927.5 12V18.5M934.5 14V18.5M942.5 12V18.5M949.5 14V18.5M957.5 12V18.5M964.5 14V18.5M972.5 12V18.5M979.5 14V18.5M987.5 12V18.5M994.5 14V18.5M1002.5 12V18.5M1009.5 14V18.5M1017.5 12V18.5M1024.5 14V18.5M1032.5 12V18.5M1039.5 14V18.5M1047.5 2V18.5M1054.5 14V18.5M1062.5 12V18.5M1069.5 14V18.5M1077.5 12V18.5M1084.5 14V18.5M1092.5 12V18.5M1099.5 14V18.5M1107.5 12V18.5M1114.5 14V18.5M1122.5 12V18.5M1129.5 14V18.5M1137.5 12V18.5M1144.5 14V18.5M1152.5 12V18.5M1159.5 14V18.5M1167.5 12V18.5M1174.5 14V18.5M1182.5 12V18.5M1189.5 14V18.5M1197.5 2V18.5M1204.5 14V18.5M1212.5 12V18.5M1219.5 14V18.5M1227.5 12V18.5M1234.5 14V18.5M1242.5 12V18.5M1249.5 14V18.5M1257.5 12V18.5M1264.5 14V18.5M1272.5 12V18.5M1279.5 14V18.5M1287.5 12V18.5M1294.5 14V18.5M1302.5 12V18.5M1309.5 14V18.5M1317.5 12V18.5M1324.5 14V18.5M1332.5 12V18.5M1339.5 14V18.5" stroke="#000" stroke-width="1" fill="none"/>
<path d="M1.8 2V18" stroke="#000" stroke-width="1.6"/><path d="M327 2V18.5" stroke="#000" stroke-width="2"/>
<text x="146.5" y="11" font-size="9" text-anchor="end" font-family="Liberation Sans,sans-serif" fill="#000">0</text>
<text x="296.5" y="11" font-size="9" text-anchor="end" font-family="Liberation Sans,sans-serif" fill="#000">100</text>
<text x="446.5" y="11" font-size="9" text-anchor="end" font-family="Liberation Sans,sans-serif" fill="#000">200</text>
<text x="596.5" y="11" font-size="9" text-anchor="end" font-family="Liberation Sans,sans-serif" fill="#000">300</text>
<text x="746.5" y="11" font-size="9" text-anchor="end" font-family="Liberation Sans,sans-serif" fill="#000">400</text>
<text x="896.5" y="11" font-size="9" text-anchor="end" font-family="Liberation Sans,sans-serif" fill="#000">500</text>
<text x="1046.5" y="11" font-size="9" text-anchor="end" font-family="Liberation Sans,sans-serif" fill="#000">600</text>
<text x="1196.5" y="11" font-size="9" text-anchor="end" font-family="Liberation Sans,sans-serif" fill="#000">700</text>
</svg>
<div class="a" style="left:226px;top:231px;width:18px;height:761px;background:#f0f0f0"></div>
<div class="a" style="left:226px;top:258px;width:18px;height:720px;background:#fff"></div>
<svg class="ic" style="left:226px;top:231px" width="18" height="760" viewBox="0 0 18 760">
<path d="M1 27.5H18M13 35.5H18M11 42.5H18M13 50.5H18M11 57.5H18M13 65.5H18M11 72.5H18M13 80.5H18M11 87.5H18M13 95.5H18M11 102.5H18M13 110.5H18M11 117.5H18M13 125.5H18M11 132.5H18M13 140.5H18M11 147.5H18M13 155.5H18M11 162.5H18M13 170.5H18M1 177.5H18M13 185.5H18M11 192.5H18M13 200.5H18M11 207.5H18M13 215.5H18M11 222.5H18M13 230.5H18M11 237.5H18M13 245.5H18M11 252.5H18M13 260.5H18M11 267.5H18M13 275.5H18M11 282.5H18M13 290.5H18M11 297.5H18M13 305.5H18M11 312.5H18M13 320.5H18M1 327.5H18M13 335.5H18M11 342.5H18M13 350.5H18M11 357.5H18M13 365.5H18M11 372.5H18M13 380.5H18M11 387.5H18M13 395.5H18M11 402.5H18M13 410.5H18M11 417.5H18M13 425.5H18M11 432.5H18M13 440.5H18M11 447.5H18M13 455.5H18M11 462.5H18M13 470.5H18M1 477.5H18M13 485.5H18M11 492.5H18M13 500.5H18M11 507.5H18M13 515.5H18M11 522.5H18M13 530.5H18M11 537.5H18M13 545.5H18M11 552.5H18M13 560.5H18M11 567.5H18M13 575.5H18M11 582.5H18M13 590.5H18M11 597.5H18M13 605.5H18M11 612.5H18M13 620.5H18M1 627.5H18M13 635.5H18M11 642.5H18M13 650.5H18M11 657.5H18M13 665.5H18M11 672.5H18M13 680.5H18M11 687.5H18M13 695.5H18M11 702.5H18M13 710.5H18M11 717.5H18M13 725.5H18M11 732.5H18M13 740.5H18" stroke="#000" stroke-width="1" fill="none"/>
<path d="M1 0.9H17" stroke="#000" stroke-width="1.6"/><path d="M1 730.5H18" stroke="#000" stroke-width="1"/>
<text transform="translate(10,27.0) rotate(-90)" font-size="9" font-family="Liberation Sans,sans-serif" fill="#000">0</text>
<text transform="translate(10,177.0) rotate(-90)" font-size="9" font-family="Liberation Sans,sans-serif" fill="#000">100</text>
<text transform="translate(10,327.0) rotate(-90)" font-size="9" font-family="Liberation Sans,sans-serif" fill="#000">200</text>
<text transform="translate(10,477.0) rotate(-90)" font-size="9" font-family="Liberation Sans,sans-serif" fill="#000">300</text>
<text transform="translate(10,627.0) rotate(-90)" font-size="9" font-family="Liberation Sans,sans-serif" fill="#000">400</text>
</svg>
<div class="a" style="left:226px;top:978px;width:18px;height:14px;background:#f0f0f0"></div>
<div class="a" style="left:245px;top:231px;width:1px;height:761px;background:#fff"></div>
<div class="a" id="cv" style="left:246px;top:231px;width:1482px;height:740px;background:#c0c0c0;overflow:hidden">
<div class="a" id="pg" style="left:145px;top:26px;width:1201px;height:730px;background:#fff;box-shadow:5px 2px 9px 2px rgba(0,0,0,.45)"></div>
<div class="ne" style="left:226px;top:53px;width:121px;height:61px"></div>
<span class="hash" style="left:225.5px;top:63.0px;width:120px;text-align:center">###.##</span>
<span class="red" style="left:230.0px;top:58.5px">NE_0 (D-1000)</span>
<span class="sim" style="left:180.0px;top:68.0px;font-family:'Liberation Serif',serif">1</span>
<span class="red" style="left:182.0px;top:72.5px">TX_0</span>
<div class="ne" style="left:226px;top:121px;width:121px;height:60px"></div>
<span class="hash" style="left:225.5px;top:131.0px;width:120px;text-align:center">###.##</span>
<span class="red" style="left:230.0px;top:126.5px">NE_1 (D-1002)</span>
<span class="sim" style="left:180.0px;top:136.0px;font-family:'Liberation Serif',serif">2</span>
<span class="red" style="left:182.0px;top:140.5px">TX_1</span>
<div class="ne" style="left:226px;top:188px;width:121px;height:61px"></div>
<span class="hash" style="left:225.5px;top:198.0px;width:120px;text-align:center">###.##</span>
<span class="red" style="left:230.0px;top:193.5px">NE_2 (D-1004)</span>
<span class="sim" style="left:180.0px;top:203.0px;font-family:'Liberation Serif',serif">3</span>
<span class="red" style="left:182.0px;top:207.5px">TX_2</span>
<div class="ne" style="left:226px;top:256px;width:121px;height:60px"></div>
<span class="hash" style="left:225.5px;top:266.0px;width:120px;text-align:center">###.##</span>
<span class="red" style="left:230.0px;top:261.5px">NE_3 (D-1006)</span>
<span class="sim" style="left:180.0px;top:271.0px;font-family:'Liberation Serif',serif">4</span>
<span class="red" style="left:182.0px;top:275.5px">TX_3</span>
<div class="ne" style="left:226px;top:323px;width:121px;height:61px"></div>
<span class="hash" style="left:225.5px;top:333.0px;width:120px;text-align:center">###.##</span>
<span class="red" style="left:230.0px;top:328.5px">NE_4 (D-1008)</span>
<span class="sim" style="left:180.0px;top:338.0px;font-family:'Liberation Serif',serif">5</span>
<span class="red" style="left:182.0px;top:342.5px">TX_4</span>
<div class="ne" style="left:226px;top:391px;width:121px;height:60px"></div>
<span class="hash" style="left:225.5px;top:401.0px;width:120px;text-align:center">###.##</span>
<span class="red" style="left:230.0px;top:396.5px">NE_5 (D-1010)</span>
<span class="sim" style="left:180.0px;top:406.0px;font-family:'Liberation Serif',serif">6</span>
<span class="red" style="left:182.0px;top:410.5px">TX_5</span>
<div class="ne" style="left:226px;top:458px;width:121px;height:61px"></div>
<span class="hash" style="left:225.5px;top:468.0px;width:120px;text-align:center">###.##</span>
<span class="red" style="left:230.0px;top:463.5px">NE_6 (D-1012)</span>
<span class="sim" style="left:180.0px;top:473.0px;font-family:'Liberation Serif',serif">7</span>
<span class="red" style="left:182.0px;top:477.5px">TX_6</span>
<div class="ne" style="left:226px;top:526px;width:121px;height:60px"></div>
<span class="hash" style="left:225.5px;top:536.0px;width:120px;text-align:center">###.##</span>
<span class="red" style="left:230.0px;top:531.5px">NE_7 (D-1014)</span>
<span class="sim" style="left:180.0px;top:541.0px;font-family:'Liberation Serif',serif">8</span>
<span class="red" style="left:182.0px;top:545.5px">TX_7</span>
<div class="ne" style="left:226px;top:593px;width:121px;height:61px"></div>
<span class="hash" style="left:225.5px;top:603.0px;width:120px;text-align:center">###.##</span>
<span class="red" style="left:230.0px;top:598.5px">NE_8 (D-1016)</span>
<span class="sim" style="left:180.0px;top:608.0px;font-family:'Liberation Serif',serif">9</span>
<span class="red" style="left:182.0px;top:612.5px">TX_8</span>
<div class="ne" style="left:226px;top:661px;width:121px;height:60px"></div>
<span class="hash" style="left:225.5px;top:671.0px;width:120px;text-align:center">###.##</span>
<span class="red" style="left:230.0px;top:666.5px">NE_9 (D-1018)</span>
<span class="sim" style="left:180.0px;top:676.0px;font-family:'Liberation Serif',serif">10</span>
<span class="red" style="left:182.0px;top:680.5px">TX_9</span>
<div class="ne" style="left:381.0px;top:56.0px;width:120px;height:61px;background:#e6e6fa"></div>
<span class="hash" style="left:390.5px;top:66.0px">#####</span>
<span class="red lng" style="left:385.0px;top:62.0px">NE_15 (LW-9600 (16bit) : <span style="position:absolute;left:189.5px;top:0;">设备</span><span style="position:absolute;left:225.5px;top:0;">4</span><span style="position:absolute;left:240.0px;top:0;">的</span><span style="position:absolute;left:262.5px;top:0;letter-spacing:-.3px">IP0</span><span style="position:absolute;left:292.0px;top:0;letter-spacing:-.3px">(IP</span><span style="position:absolute;left:310.5px;top:0;">地址</span><span style="position:absolute;left:351.5px;top:0;">=</span><span style="position:absolute;left:364.5px;top:0;letter-spacing:-.6px">IP0:IP1:IP2:IP3))</span></span>
<div class="ne" style="left:381.0px;top:131.0px;width:120px;height:61px;background:#e6e6fa"></div>
<span class="hash" style="left:390.5px;top:141.0px">#####</span>
<span class="red lng" style="left:385.0px;top:137.0px">NE_16 (LW-9601 (16bit) : <span style="position:absolute;left:189.5px;top:0;">设备</span><span style="position:absolute;left:225.5px;top:0;">4</span><span style="position:absolute;left:240.0px;top:0;">的</span><span style="position:absolute;left:262.5px;top:0;letter-spacing:-.3px">IP1</span><span style="position:absolute;left:292.0px;top:0;letter-spacing:-.3px">(IP</span><span style="position:absolute;left:310.5px;top:0;">地址</span><span style="position:absolute;left:351.5px;top:0;">=</span><span style="position:absolute;left:364.5px;top:0;letter-spacing:-.6px">IP0:IP1:IP2:IP3))</span></span>
<div class="ne" style="left:381.0px;top:206.0px;width:120px;height:61px;background:#e6e6fa"></div>
<span class="hash" style="left:390.5px;top:216.0px">#####</span>
<span class="red lng" style="left:385.0px;top:212.0px">NE_17 (LW-9602 (16bit) : <span style="position:absolute;left:189.5px;top:0;">设备</span><span style="position:absolute;left:225.5px;top:0;">4</span><span style="position:absolute;left:240.0px;top:0;">的</span><span style="position:absolute;left:262.5px;top:0;letter-spacing:-.3px">IP2</span><span style="position:absolute;left:292.0px;top:0;letter-spacing:-.3px">(IP</span><span style="position:absolute;left:310.5px;top:0;">地址</span><span style="position:absolute;left:351.5px;top:0;">=</span><span style="position:absolute;left:364.5px;top:0;letter-spacing:-.6px">IP0:IP1:IP2:IP3))</span></span>
<div class="ne" style="left:381.0px;top:281.0px;width:120px;height:61px;background:#e6e6fa"></div>
<span class="hash" style="left:390.5px;top:291.0px">#####</span>
<div class="ne" style="left:381.0px;top:356.0px;width:120px;height:61px;background:#e6e6fa"></div>
<span class="hash" style="left:390.5px;top:366.0px">#####</span>
<span class="red lng" style="left:385.0px;top:362.0px">NE_19 (LW-9604 (16bit) : <span style="position:absolute;left:189.5px;top:0;">设备</span><span style="position:absolute;left:225.5px;top:0;">4</span><span style="position:absolute;left:240.0px;top:0;letter-spacing:2.2px">的端口)</span></span>
<div class="ne" style="left:985px;top:31.0px;width:120px;height:60px;background:#c0c0c0"></div>
<span class="hash" style="left:984px;top:41px;width:120px;text-align:center">###.##</span>
<span class="red" style="left:989px;top:37px">ND_0 (D-60)</span>
<div class="ts" style="left:864.2px;top:129.2px;width:149.6px;height:65.6px;background:#72e6b8"><i></i></div>
<span class="sim" style="left:864.2px;top:128.7px;width:149.6px;text-align:center;line-height:65.6px"><span class="lat" style="transform:scaleX(.84);transform-origin:50% 50%">JOG<span style="display:inline-block;transform:scale(1.6,.6);margin:0 3.5px">-</span></span></span>
<span class="red" style="left:862.4px;top:129.9px">TS_0 (M-11)</span>
<div class="ts" style="left:1071.3px;top:127.4px;width:149.6px;height:65.6px;background:#72e6b8"><i></i></div>
<span class="sim" style="left:1071.3px;top:126.9px;width:149.6px;text-align:center;line-height:65.6px"><span class="lat" style="transform:scaleX(.84);transform-origin:50% 50%">JOG+</span></span>
<span class="red" style="left:1069.5px;top:128.1px">TS_1 (M-10)</span>
<div class="ts" style="left:591.7px;top:234.4px;width:149.6px;height:65.6px;background:#72e6b8"><i></i></div>
<span class="sim" style="left:591.7px;top:236.4px;width:149.6px;text-align:center;line-height:65.6px;word-spacing:6px">单次</span>
<span class="red" style="left:589.9px;top:235.1px">TS_6 (M-16)</span>
<div class="ts" style="left:780.7px;top:234.4px;width:149.6px;height:65.6px;background:#72e6b8"><i></i></div>
<span class="sim" style="left:780.7px;top:236.4px;width:149.6px;text-align:center;line-height:65.6px;word-spacing:6px">启 动</span>
<span class="red" style="left:778.9px;top:235.1px">TS_3 (M-40)</span>
<div class="ts" style="left:962.8px;top:235.0px;width:149.6px;height:65.6px;background:#fff280"><i></i></div>
<span class="sim" style="left:962.8px;top:237.0px;width:149.6px;text-align:center;line-height:65.6px;word-spacing:6px">回原点</span>
<span class="red" style="left:961.0px;top:235.7px">TS_2 (M-13)</span>
<div class="ts" style="left:1145.8px;top:235.0px;width:149.6px;height:65.6px;background:#ff8098"><i></i></div>
<span class="sim" style="left:1145.8px;top:237.0px;width:149.6px;text-align:center;line-height:65.6px;word-spacing:6px">停 止</span>
<span class="red" style="left:1144.0px;top:235.7px">TS_5 (M-0)</span>
<div class="ts" style="left:477.3px;top:544.8px;width:149.6px;height:65.6px;background:#72e6b8"><i></i></div>
<span class="sim" style="left:477.3px;top:545.0px;width:149.6px;text-align:center;font-size:27px;font-family:'Liberation Serif',serif;font-weight:normal;line-height:65.6px">+</span>
<span class="red" style="left:475.5px;top:545.5px">TS_7 (M-150)</span>
<div class="ts" style="left:686.3px;top:543.4px;width:149.6px;height:65.6px;background:#72e6b8"><i></i></div>
<span class="sim" style="left:686.3px;top:543.6px;width:149.6px;text-align:center;font-size:27px;font-family:'Liberation Serif',serif;font-weight:normal;line-height:65.6px">−</span>
<span class="red" style="left:684.5px;top:544.1px">TS_8 (M-151)</span>
<div class="ts" style="left:966.3px;top:552.1px;width:149.6px;height:65.6px;background:#72e6b8"><i></i></div>
<span class="sim" style="left:966.3px;top:554.1px;width:149.6px;text-align:center;line-height:65.6px;word-spacing:6px">点位保存</span>
<span class="red" style="left:964.5px;top:552.8px">TS_4 (M-20)</span>
<span class="red lng" style="left:385.0px;top:287.0px">NE_18 (LW-9603 (16bit) : <span style="position:absolute;left:189.5px;top:0;">设备</span><span style="position:absolute;left:225.5px;top:0;">4</span><span style="position:absolute;left:240.0px;top:0;">的</span><span style="position:absolute;left:262.5px;top:0;letter-spacing:-.3px">IP3</span><span style="position:absolute;left:292.0px;top:0;letter-spacing:-.3px">(IP</span><span style="position:absolute;left:310.5px;top:0;">地址</span><span style="position:absolute;left:351.5px;top:0;">=</span><span style="position:absolute;left:364.5px;top:0;letter-spacing:-.6px">IP0:IP1:IP2:IP3))</span></span>
<span class="sim" style="left:775.0px;top:340.5px;font-size:30.6px;letter-spacing:1px">运行速度</span>
<span class="red" style="left:778.0px;top:343.0px">TX_11</span>
<span class="sim" style="left:943.0px;top:340.5px;font-size:30.6px;letter-spacing:1px"><span class="lat" style="transform:scaleX(.8);margin-right:-8px">JOG</span>速度</span>
<span class="red" style="left:946.0px;top:343.0px">TX_12</span>
<span class="sim" style="left:1112.0px;top:337.5px;font-size:30.6px;letter-spacing:1px">总点数</span>
<span class="red" style="left:1115.0px;top:340.0px">TX_13</span>
<span class="sim" style="left:986.0px;top:629.5px;font-size:30.6px;letter-spacing:1px">点位选择</span>
<span class="red" style="left:989.0px;top:632.0px">TX_10</span>
<div class="ne" style="left:778.5px;top:377.0px;width:120px;height:61px"></div>
<span class="hash" style="left:777.0px;top:386.5px;width:120px;text-align:center">######</span>
<span class="red" style="left:782.5px;top:383.0px">NE_11 (D-500)</span>
<div class="ne" style="left:942.2px;top:377.0px;width:120px;height:61px"></div>
<span class="hash" style="left:940.7px;top:386.5px;width:120px;text-align:center">######</span>
<span class="red" style="left:946.2px;top:383.0px">NE_12 (D-502)</span>
<div class="ne" style="left:1101.0px;top:374.5px;width:120px;height:61px"></div>
<span class="hash" style="left:1095.0px;top:385.0px;width:120px;text-align:center">###</span>
<span class="red" style="left:1105.0px;top:380.5px">NE_13 (D-504)</span>
<div class="ne" style="left:1267.0px;top:372.5px;width:80px;height:61px"></div>
<span class="hash" style="left:1270.0px;top:385.0px;width:80px;text-align:center">###</span>
<span class="red" style="left:1271.0px;top:378.5px">NE_14 (D-20)</span>
<div class="ne" style="left:988.0px;top:665.0px;width:120px;height:61px"></div>
<span class="hash" style="left:983.0px;top:677.5px;width:120px;text-align:center">###</span>
<span class="red" style="left:992.0px;top:671.0px">NE_10 (D-10)</span>
<div class="a" style="left:716px;top:386px;width:60px;height:2px;background:#808080"></div>
<div class="a" style="left:745px;top:357px;width:2px;height:61px;background:#808080"></div>
</div>
<div class="a" style="left:1728px;top:231px;width:22px;height:740px;background:#f0f0f0"></div>
<div class="a" style="left:1729px;top:434px;width:19px;height:317px;background:#cdcdcd"></div>
<svg class="ic" style="left:1733px;top:238px" width="11" height="7" viewBox="0 0 11 7"><path d="M0.7 6.3 L5.5 1.2 L10.3 6.3" fill="none" stroke="#505050" stroke-width="1.8"/></svg>
<svg class="ic" style="left:1733px;top:956px" width="11" height="7" viewBox="0 0 11 7"><path d="M0.7 0.7 L5.5 5.8 L10.3 0.7" fill="none" stroke="#505050" stroke-width="1.8"/></svg>
<div class="a" style="left:246px;top:970px;width:1504px;height:22px;background:#f0f0f0;border-top:1px solid #fff"></div>
<div class="a" style="left:539px;top:971px;width:888px;height:19px;background:#cdcdcd"></div>
<svg class="ic" style="left:251px;top:976px" width="7" height="11" viewBox="0 0 7 11"><path d="M6.3 0.7 L1.2 5.5 L6.3 10.3" fill="none" stroke="#505050" stroke-width="1.8"/></svg>
<svg class="ic" style="left:1714px;top:976px" width="7" height="11" viewBox="0 0 7 11"><path d="M0.7 0.7 L5.8 5.5 L0.7 10.3" fill="none" stroke="#505050" stroke-width="1.8"/></svg>
<div class="a" style="left:1762px;top:180px;width:76px;height:24px;background:linear-gradient(180deg,#f4f6fb 0,#bfcde0 1.5px,#c6d3e3 30%,#d5dfec 70%,#e0e8f2 100%)"></div>
<span class="t" style="left:1767px;top:186px;font-size:14px;color:#000">图片库</span>
<div class="a" style="left:1762px;top:205px;width:80px;height:766px;background:#f0f0f0;border:1px solid #a9b0bd"></div>
<div class="a" style="left:1771px;top:215px;width:70px;height:24px;background:#e1e1e1;border:1px solid #adadad"></div>
<span class="t" style="left:1775px;top:219px;font-size:15px;color:#000;letter-spacing:1.5px;word-spacing:1px">[ 工程文件</span>
<div class="a" style="left:1771px;top:249px;width:70px;height:24px;background:#f0f0f0;border:1px solid #d6d6d6;box-shadow:0 0 0 1px #fff"></div>
<div class="a" style="left:1771px;top:281px;width:72px;height:651px;background:#f0f0f0;border:1px solid #b4b4b4;overflow:hidden">
<div class="a" style="left:0;top:0;width:72px;height:160px;background:#ff0"></div>
<div class="a" style="left:4px;top:10px;width:80px;height:143px;border:1px solid #a8a8a8;box-shadow:1px 1px 0 #fff inset,0 1px 0 #fff"></div>
<span class="t" style="left:10px;top:4px;font-size:12.5px;padding:0 2px 0 3px;background:#ff0;color:#000">0</span>
<div class="a" style="left:9px;top:22px;width:80px;height:127px;border:1px solid #8a8a8a;box-shadow:1px 1px 0 #fff inset"></div>
<div class="a" style="left:18px;top:36px;width:80px;height:100px;background:#fff"></div>
<div class="a" style="left:4px;top:170px;width:80px;height:143px;border:1px solid #d2d2d2;box-shadow:1px 1px 0 #fff inset,0 1px 0 #fff"></div>
<span class="t" style="left:10px;top:164px;font-size:12.5px;padding:0 2px 0 3px;background:#f0f0f0;color:#000">1</span>
<div class="a" style="left:9px;top:182px;width:80px;height:127px;border:1px solid #8a8a8a;box-shadow:1px 1px 0 #fff inset"></div>
<div class="a" style="left:18px;top:196px;width:80px;height:100px;background:#fff"></div>
<div class="a" style="left:4px;top:330px;width:80px;height:143px;border:1px solid #d2d2d2;box-shadow:1px 1px 0 #fff inset,0 1px 0 #fff"></div>
<span class="t" style="left:10px;top:324px;font-size:12.5px;padding:0 2px 0 3px;background:#f0f0f0;color:#000">2</span>
<div class="a" style="left:9px;top:342px;width:80px;height:127px;border:1px solid #8a8a8a;box-shadow:1px 1px 0 #fff inset"></div>
<div class="a" style="left:18px;top:356px;width:80px;height:100px;background:#fff"></div>
<div class="a" style="left:4px;top:490px;width:80px;height:143px;border:1px solid #d2d2d2;box-shadow:1px 1px 0 #fff inset,0 1px 0 #fff"></div>
<span class="t" style="left:10px;top:484px;font-size:12.5px;padding:0 2px 0 3px;background:#f0f0f0;color:#000">3</span>
<div class="a" style="left:9px;top:502px;width:80px;height:127px;border:1px solid #8a8a8a;box-shadow:1px 1px 0 #fff inset"></div>
<div class="a" style="left:18px;top:516px;width:80px;height:100px;background:#fff"></div>
<div class="a" style="left:4px;top:650px;width:80px;height:143px;border:1px solid #d2d2d2;box-shadow:1px 1px 0 #fff inset,0 1px 0 #fff"></div>
<span class="t" style="left:10px;top:644px;font-size:12.5px;padding:0 2px 0 3px;background:#f0f0f0;color:#000">4</span>
<div class="a" style="left:9px;top:662px;width:80px;height:127px;border:1px solid #8a8a8a;box-shadow:1px 1px 0 #fff inset"></div>
<div class="a" style="left:18px;top:676px;width:80px;height:100px;background:#fff"></div>
<div class="a" style="left:28px;top:54.0px;width:14px;height:13.5px;border-radius:3px;background:linear-gradient(180deg,#b9b9b9,#a4a4a4);border:1px solid #969696;color:#cfcfcf;font-size:7px;line-height:11px;text-align:center">7</div>
<div class="a" style="left:44px;top:54.0px;width:14px;height:13.5px;border-radius:3px;background:linear-gradient(180deg,#b9b9b9,#a4a4a4);border:1px solid #969696;color:#cfcfcf;font-size:7px;line-height:11px;text-align:center">8</div>
<div class="a" style="left:60px;top:54.0px;width:14px;height:13.5px;border-radius:3px;background:linear-gradient(180deg,#b9b9b9,#a4a4a4);border:1px solid #969696;color:#cfcfcf;font-size:7px;line-height:11px;text-align:center">9</div>
<div class="a" style="left:28px;top:69.6px;width:14px;height:13.5px;border-radius:3px;background:linear-gradient(180deg,#b9b9b9,#a4a4a4);border:1px solid #969696;color:#cfcfcf;font-size:7px;line-height:11px;text-align:center">4</div>
<div class="a" style="left:44px;top:69.6px;width:14px;height:13.5px;border-radius:3px;background:linear-gradient(180deg,#b9b9b9,#a4a4a4);border:1px solid #969696;color:#cfcfcf;font-size:7px;line-height:11px;text-align:center">5</div>
<div class="a" style="left:60px;top:69.6px;width:14px;height:13.5px;border-radius:3px;background:linear-gradient(180deg,#b9b9b9,#a4a4a4);border:1px solid #969696;color:#cfcfcf;font-size:7px;line-height:11px;text-align:center">6</div>
<div class="a" style="left:28px;top:85.2px;width:14px;height:13.5px;border-radius:3px;background:linear-gradient(180deg,#b9b9b9,#a4a4a4);border:1px solid #969696;color:#cfcfcf;font-size:7px;line-height:11px;text-align:center">1</div>
<div class="a" style="left:44px;top:85.2px;width:14px;height:13.5px;border-radius:3px;background:linear-gradient(180deg,#b9b9b9,#a4a4a4);border:1px solid #969696;color:#cfcfcf;font-size:7px;line-height:11px;text-align:center">2</div>
<div class="a" style="left:60px;top:85.2px;width:14px;height:13.5px;border-radius:3px;background:linear-gradient(180deg,#b9b9b9,#a4a4a4);border:1px solid #969696;color:#cfcfcf;font-size:7px;line-height:11px;text-align:center">3</div>
<div class="a" style="left:28px;top:100.8px;width:14px;height:13.5px;border-radius:3px;background:linear-gradient(180deg,#b9b9b9,#a4a4a4);border:1px solid #969696;color:#cfcfcf;font-size:7px;line-height:11px;text-align:center">.</div>
<div class="a" style="left:44px;top:100.8px;width:14px;height:13.5px;border-radius:3px;background:linear-gradient(180deg,#b9b9b9,#a4a4a4);border:1px solid #969696;color:#cfcfcf;font-size:7px;line-height:11px;text-align:center">0</div>
<div class="a" style="left:60px;top:100.8px;width:14px;height:13.5px;border-radius:3px;background:linear-gradient(180deg,#b9b9b9,#a4a4a4);border:1px solid #969696;color:#cfcfcf;font-size:7px;line-height:11px;text-align:center">-</div>
<div class="a" style="left:28px;top:214px;width:60px;height:9px;border:1px solid #6fa0d8;background:#fff"></div>
<span class="t" style="left:29px;top:206px;font-size:6px;color:#2a4ea0;font-weight:bold">WUC:</span>
<div class="a" style="left:42px;top:210px;width:40px;height:2px;background:#aaa"></div>
<div class="a" style="left:28px;top:225.0px;width:14px;height:13px;border-radius:3px;background:#000;color:#fff;font-size:8px;line-height:13px;text-align:center;font-weight:bold">7</div>
<div class="a" style="left:44px;top:225.0px;width:14px;height:13px;border-radius:3px;background:#000;color:#fff;font-size:8px;line-height:13px;text-align:center;font-weight:bold">8</div>
<div class="a" style="left:60px;top:225.0px;width:14px;height:13px;border-radius:3px;background:#000;color:#fff;font-size:8px;line-height:13px;text-align:center;font-weight:bold">9</div>
<div class="a" style="left:28px;top:240.8px;width:14px;height:13px;border-radius:3px;background:#000;color:#fff;font-size:8px;line-height:13px;text-align:center;font-weight:bold">4</div>
<div class="a" style="left:44px;top:240.8px;width:14px;height:13px;border-radius:3px;background:#000;color:#fff;font-size:8px;line-height:13px;text-align:center;font-weight:bold">5</div>
<div class="a" style="left:60px;top:240.8px;width:14px;height:13px;border-radius:3px;background:#000;color:#fff;font-size:8px;line-height:13px;text-align:center;font-weight:bold">6</div>
<div class="a" style="left:28px;top:256.6px;width:14px;height:13px;border-radius:3px;background:#000;color:#fff;font-size:8px;line-height:13px;text-align:center;font-weight:bold">1</div>
<div class="a" style="left:44px;top:256.6px;width:14px;height:13px;border-radius:3px;background:#000;color:#fff;font-size:8px;line-height:13px;text-align:center;font-weight:bold">2</div>
<div class="a" style="left:60px;top:256.6px;width:14px;height:13px;border-radius:3px;background:#000;color:#fff;font-size:8px;line-height:13px;text-align:center;font-weight:bold">3</div>
<div class="a" style="left:28px;top:272.4px;width:14px;height:13px;border-radius:3px;background:#000;color:#fff;font-size:8px;line-height:13px;text-align:center;font-weight:bold">.</div>
<div class="a" style="left:44px;top:272.4px;width:14px;height:13px;border-radius:3px;background:#000;color:#fff;font-size:8px;line-height:13px;text-align:center;font-weight:bold">0</div>
<div class="a" style="left:60px;top:272.4px;width:14px;height:13px;border-radius:3px;background:#000;color:#fff;font-size:8px;line-height:13px;text-align:center;font-weight:bold">-</div>
<div class="a" style="left:34px;top:526px;width:60px;height:80px;background:#d3e6c3"></div>
<div class="a" style="left:36px;top:537px;width:60px;height:11px;background:linear-gradient(180deg,#fff,#ddd)"></div>
<div class="a" style="left:37px;top:552.0px;width:14px;height:10px;background:linear-gradient(180deg,#8a8f92,#2e3336)"></div>
<div class="a" style="left:53px;top:552.0px;width:14px;height:10px;background:linear-gradient(180deg,#8a8f92,#2e3336)"></div>
<div class="a" style="left:69px;top:552.0px;width:14px;height:10px;background:linear-gradient(180deg,#8a8f92,#2e3336)"></div>
<div class="a" style="left:37px;top:565.4px;width:14px;height:10px;background:linear-gradient(180deg,#8a8f92,#2e3336)"></div>
<div class="a" style="left:53px;top:565.4px;width:14px;height:10px;background:linear-gradient(180deg,#8a8f92,#2e3336)"></div>
<div class="a" style="left:69px;top:565.4px;width:14px;height:10px;background:linear-gradient(180deg,#8a8f92,#2e3336)"></div>
<div class="a" style="left:37px;top:578.8px;width:14px;height:10px;background:linear-gradient(180deg,#8a8f92,#2e3336)"></div>
<div class="a" style="left:53px;top:578.8px;width:14px;height:10px;background:linear-gradient(180deg,#8a8f92,#2e3336)"></div>
<div class="a" style="left:69px;top:578.8px;width:14px;height:10px;background:linear-gradient(180deg,#8a8f92,#2e3336)"></div>
<div class="a" style="left:37px;top:592.2px;width:14px;height:10px;background:linear-gradient(180deg,#8a8f92,#2e3336)"></div>
<div class="a" style="left:53px;top:592.2px;width:14px;height:10px;background:linear-gradient(180deg,#8a8f92,#2e3336)"></div>
<div class="a" style="left:69px;top:592.2px;width:14px;height:10px;background:linear-gradient(180deg,#8a8f92,#2e3336)"></div>
</div>
<div class="a" style="left:1778px;top:946px;width:70px;height:4px;border:1px solid #d0d0d0;background:#e8e8e8"></div>
<div class="a" style="left:1764px;top:971px;width:80px;height:24px;background:#f0f0f0;border:1px solid #dcdcdc;border-top:0"></div>
<span class="t" style="left:1773px;top:977px;font-size:14px;color:#555">向量图库</span>
<div class="a" style="left:0;top:998px;width:1838px;height:10px;background:#f0f0f0"></div>
<div class="a" style="left:160px;top:1001px;width:1px;height:7px;background:#6e6e6e"></div>
<div class="a" style="left:375px;top:1001px;width:1px;height:7px;background:#6e6e6e"></div>
<div class="a" style="left:1140px;top:1001px;width:1px;height:7px;background:#6e6e6e"></div>
<div class="a" style="left:1250px;top:1001px;width:1px;height:7px;background:#6e6e6e"></div>
<div class="a" style="left:1360px;top:1001px;width:1px;height:7px;background:#6e6e6e"></div>
<div class="a" style="left:1445px;top:1001px;width:1px;height:7px;background:#6e6e6e"></div>
<div class="a" style="left:1530px;top:1001px;width:1px;height:7px;background:#6e6e6e"></div>
<div class="a" style="left:1561px;top:1001px;width:1px;height:7px;background:#6e6e6e"></div>
<svg class="ic" style="left:1586px;top:994px" width="36" height="14" viewBox="0 0 36 14"><path d="M2 6 L29 1 L34 14 H4 Z" fill="#f26a2a"/><path d="M8 14 Q10 8 20 8 H30" fill="none" stroke="#fff" stroke-width="2.5"/></svg>
<div class="a" style="left:1637px;top:1005px;width:3px;height:3px;background:#2b7cd3"></div>
<div class="a" style="left:1688px;top:1003px;width:14px;height:5px;background:#2b7cd3;border-radius:7px 7px 0 0"></div>
<div class="a" style="left:1718px;top:1003px;width:6px;height:5px;background:#2b7cd3;border-radius:3px 3px 0 0"></div>
<div class="a" style="left:1776px;top:1006px;width:3px;height:2px;background:#8a8a8a"></div>
<div class="a" style="left:1805px;top:1005px;width:12px;height:3px;background:#3a5ea8"></div>
<div class="a" style="left:1822px;top:1005px;width:12px;height:3px;background:#3a5ea8"></div>
</body></html>
